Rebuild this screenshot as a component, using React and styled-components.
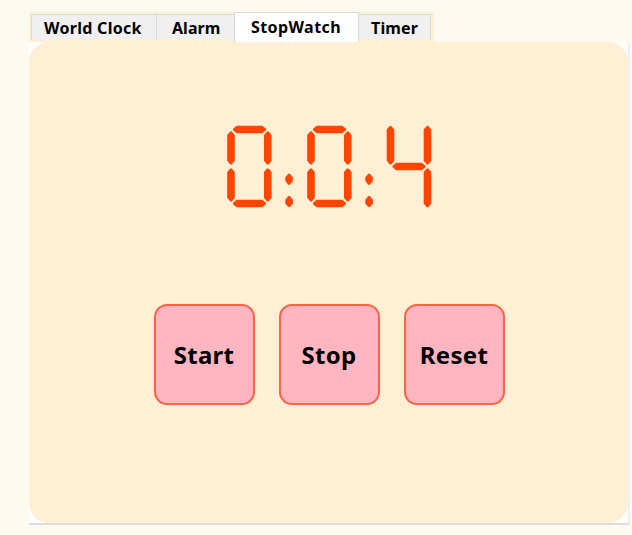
import React from "react";
import styled, { createGlobalStyle } from "styled-components";

const GlobalStyle = createGlobalStyle`
  * { box-sizing: border-box; }
  body {
    margin: 0;
    background: #fffaf0;
    font-family: "Noto Sans", "Liberation Sans", sans-serif;
    color: #000;
  }
`;

const Window = styled.main`
  width: 632px;
  height: 535px;
  padding: 12px 2px 0 29px;
  overflow: hidden;
  background: #fffaf0;
`;

const TabBar = styled.nav`
  display: flex;
  width: 405px;
  height: 30px;
  padding-left: 2px;
  background: #ffefd5;
`;

const Tab = styled.button`
  width: ${(p) => p.$width}px;
  height: ${(p) => (p.$active ? 30 : 26)}px;
  margin: ${(p) => (p.$active ? 0 : "2px")} 0 0;
  padding: 0 0 0 ${(p) => p.$inset}px;
  border: solid #d9d9d9;
  border-width: 1px ${(p) => (p.$closed ? 1 : 0)}px 0 ${(p) => (p.$open ? 0 : 1)}px;
  background: ${(p) => (p.$active ? "#ffffff" : "#f0f0f0")};
  font: bold 16px/27px "Noto Sans", sans-serif;
  letter-spacing: ${(p) => p.$spacing}px;
  text-align: left;
  white-space: nowrap;
  color: #000;
`;

const Pane = styled.section`
  width: 601px;
  height: 483px;
  border-right: 2px solid #f0f0f0;
  border-bottom: 2px solid #dcdcdc;
  background: #ffffff;
`;

const Panel = styled.div`
  display: flex;
  flex-direction: column;
  align-items: flex-start;
  width: 599px;
  height: 481px;
  padding-top: 82px;
  border-radius: 20px;
  background: #ffefd5;
`;

const Display = styled.svg`
  display: block;
  width: 210px;
  height: 86px;
  margin-left: 196px;
  fill: #ff4500;
`;

const Controls = styled.div`
  display: flex;
  gap: 24px;
  margin: 94px 0 0 125px;
`;

const ControlButton = styled.button`
  width: 101px;
  height: 101px;
  padding: 0 1px 0 0;
  border: 2.4px solid #ff6347;
  border-radius: 13px;
  background: #ffb6c1;
  font: bold 24px/32px "Noto Sans", sans-serif;
  letter-spacing: ${(p) => p.$spacing}px;
  text-align: center;
  color: #000;
`;

const vertical = (x, y, h) =>
  `${x + 3},${y} ${x + 4.6},${y} ${x + 7.6},${y + 3.6} ${x + 7.6},${y + h - 3.6} ${x + 4.6},${y + h} ${x + 3},${y + h} ${x},${y + h - 3.6} ${x},${y + 3.6}`;

const horizontal = (x, y, w) =>
  `${x},${y + 3} ${x + 3.6},${y} ${x + w - 3.6},${y} ${x + w},${y + 3} ${x + w},${y + 4.6} ${x + w - 3.6},${y + 7.6} ${x + 3.6},${y + 7.6} ${x},${y + 4.6}`;

const Zero = ({ x }) => (
  <g transform={`translate(${x} 0)`}>
    <polygon points={horizontal(6, 1.7, 33)} />
    <polygon points={vertical(0.2, 7.4, 33)} />
    <polygon points={vertical(37, 7.4, 33)} />
    <polygon points={vertical(0.2, 44.4, 33)} />
    <polygon points={vertical(37, 44.4, 33)} />
    <polygon points={horizontal(6, 75.7, 33)} />
  </g>
);

const Four = ({ x }) => (
  <g transform={`translate(${x} 0)`}>
    <polygon points={vertical(0.2, 1.9, 38.5)} />
    <polygon points={vertical(37.2, 1.9, 38.5)} />
    <polygon points={horizontal(6, 38.7, 33)} />
    <polygon points={vertical(37.2, 44.4, 38.8)} />
  </g>
);

const Colon = ({ x }) => (
  <g transform={`translate(${x} 0)`}>
    <polygon points={vertical(0.3, 49.7, 11)} />
    <polygon points={vertical(0.3, 72.1, 11)} />
  </g>
);

export default function App() {
  return (
    <>
      <GlobalStyle />
      <Window>
        <TabBar>
          <Tab $width={125} $inset={12} $spacing={0.29}>World Clock</Tab>
          <Tab $width={78} $inset={15} $spacing={0.05}>Alarm</Tab>
          <Tab $width={125} $inset={16} $spacing={0.42} $active $closed>StopWatch</Tab>
          <Tab $width={72} $inset={12} $spacing={0.15} $open $closed>Timer</Tab>
        </TabBar>
        <Pane>
          <Panel>
            <Display viewBox="0 0 210 86" role="img" aria-label="0:0:4">
              <Zero x={2} />
              <Colon x={60} />
              <Zero x={82} />
              <Colon x={140} />
              <Four x={161.5} />
            </Display>
            <Controls>
              <ControlButton $spacing={0.25}>Start</ControlButton>
              <ControlButton $spacing={0.3}>Stop</ControlButton>
              <ControlButton $spacing={0.3}>Reset</ControlButton>
            </Controls>
          </Panel>
        </Pane>
      </Window>
    </>
  );
}
